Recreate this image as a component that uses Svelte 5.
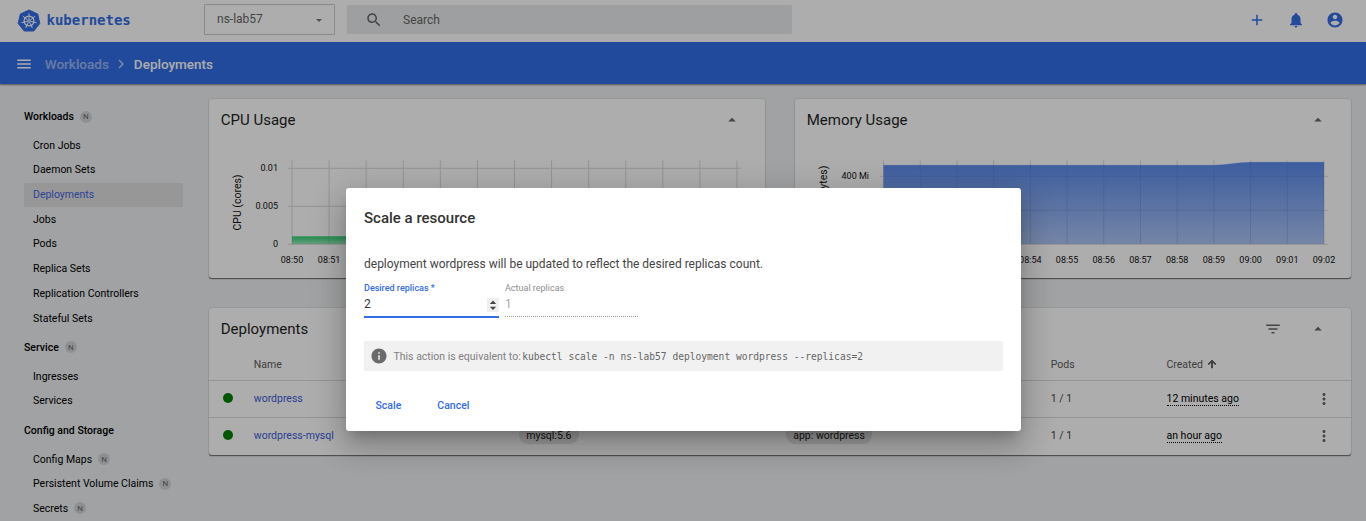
<script>
  const nav = [
    { title: 'Workloads', tag: true, items: [
      { name: 'Cron Jobs' }, { name: 'Daemon Sets' }, { name: 'Deployments', active: true }, { name: 'Jobs' },
      { name: 'Pods' }, { name: 'Replica Sets' }, { name: 'Replication Controllers' }, { name: 'Stateful Sets' }
    ] },
    { title: 'Service', tag: true, items: [{ name: 'Ingresses' }, { name: 'Services' }] },
    { title: 'Config and Storage', tag: false, items: [
      { name: 'Config Maps', tag: true }, { name: 'Persistent Volume Claims', tag: true }, { name: 'Secrets', tag: true }
    ] }
  ];
  const times = ['08:50', '08:51', '08:52', '08:53', '08:54', '08:55', '08:56', '08:57', '08:58', '08:59', '09:00', '09:01', '09:02'];
  const cpu = {
    id: 'cpu', title: 'CPU Usage', axis: 'CPU (cores)', axisX: 28, color: '#00c752', x0: 83, x1: 528,
    rows: [{ y: 27, label: '0.01' }, { y: 65, label: '0.005' }, { y: 103, label: '0' }], labelX: 69,
    area: 'M83 95.5H528V103H83z', line: 'M83 95.5H528'
  };
  const mem = {
    id: 'mem', title: 'Memory Usage', axis: 'Memory (bytes)', axisX: 28, color: '#326de6', x0: 88.5, x1: 529,
    rows: [{ y: 35, label: '400 Mi' }, { y: 69, label: '200 Mi' }, { y: 103, label: '0' }], labelX: 74,
    area: 'M88.5 24.3H419C431 24 443 21.3 456 21.3H529V103H88.5z', line: 'M88.5 24.3H419C431 24 443 21.3 456 21.3H529'
  };
  const rows = [
    { name: 'wordpress', created: '12 minutes ago' },
    { name: 'wordpress-mysql', image: 'mysql:5.6', label: 'app: wordpress', created: 'an hour ago' }
  ];
  const spokes = [0, 1, 2, 3, 4, 5, 6].map((i) => (i * 360) / 7);
</script>

{#snippet icon(d, cls)}
  <svg class="icon {cls}" viewBox="0 0 24 24"><path {d} /></svg>
{/snippet}

{#snippet chart(c)}
  <section class="card graph">
    <header class="card-head">
      <h2>{c.title}</h2>
      {@render icon('M7 14l5-5 5 5z', 'grey')}
    </header>
    <svg class="plot" viewBox="0 0 556 137">
      <defs>
        <linearGradient id={c.id} x1="0" y1="0" x2="0" y2="1">
          <stop offset="0" stop-color={c.color} stop-opacity=".8" />
          <stop offset="1" stop-color={c.color} stop-opacity=".4" />
        </linearGradient>
      </defs>
      {#each times as t, i}
        {@const x = c.x0 + ((c.x1 - c.x0) * i) / 12}
        <path class="grid" d="M{x} 19.5V104" />
        <text x={x} y="122.3" text-anchor="middle">{t}</text>
      {/each}
      {#each c.rows as r}
        <path class="grid" d="M{c.x0 - 4} {r.y + 0.3}H{c.x1 + 4}" />
        <text x={c.labelX} y={r.y + 3} text-anchor="end">{r.label}</text>
      {/each}
      <path d={c.area} fill="url(#{c.id})" />
      <path d={c.line} fill="none" stroke={c.color} stroke-opacity=".5" stroke-width=".5" />
      <text class="axis" transform="translate({c.axisX + 3.5} 61.5) rotate(-90)" text-anchor="middle">{c.axis}</text>
    </svg>
  </section>
{/snippet}

<div class="app">
  <header class="top">
    <div class="brand">
      <svg class="logo" viewBox="-12 -12 24 24">
        <path class="hept" d="M0-11L8.7-6.9 10.8 2.5 4.8 10H-4.8L-10.8 2.5-8.7-6.9z" />
        <circle r="4.9" class="rim" />
        {#each spokes as a}
          <path class="spoke" transform="rotate({a})" d="M0-1.5V-7.8" />
        {/each}
        <circle r="1.7" fill="#fff" /><circle r=".7" fill="#326de6" />
      </svg>
      <span>kubernetes</span>
    </div>
    <div class="select"><span>ns-lab57</span><i></i></div>
    <div class="search">
      {@render icon('M15.5 14h-.79l-.28-.27C15.41 12.59 16 11.11 16 9.5 16 5.91 13.09 3 9.5 3S3 5.91 3 9.5 5.91 16 9.5 16c1.61 0 3.09-.59 4.23-1.57l.27.28v.79l5 4.99L20.49 19l-4.99-5zm-6 0C7.01 14 5 11.99 5 9.5S7.01 5 9.5 5 14 7.01 14 9.5 11.99 14 9.5 14z', 'grey')}
      <span>Search</span>
    </div>
    <div class="actions">
      {@render icon('M19 13h-6v6h-2v-6H5v-2h6V5h2v6h6v2z', 'blue')}
      {@render icon('M12 22c1.1 0 2-.9 2-2h-4c0 1.1.89 2 2 2zm6-6v-5c0-3.07-1.64-5.64-4.5-6.32V4c0-.83-.67-1.5-1.5-1.5s-1.5.67-1.5 1.5v.68C7.63 5.36 6 7.92 6 11v5l-2 2v1h16v-1l-2-2z', 'blue')}
      {@render icon('M12 2C6.48 2 2 6.48 2 12s4.48 10 10 10 10-4.48 10-10S17.52 2 12 2zm0 3c1.66 0 3 1.34 3 3s-1.34 3-3 3-3-1.34-3-3 1.34-3 3-3zm0 14.2c-2.5 0-4.71-1.28-6-3.22.03-1.99 4-3.08 6-3.08 1.99 0 5.97 1.09 6 3.08-1.29 1.94-3.5 3.22-6 3.22z', 'blue')}
    </div>
  </header>

  <div class="crumbs">
    {@render icon('M3 18h18v-2H3v2zm0-5h18v-2H3v2zm0-7v2h18V6H3z', 'white')}
    <span class="parent">Workloads</span>
    {@render icon('M10 6L8.59 7.41 13.17 12l-4.58 4.59L10 18l6-6z', 'chevron')}
    <span>Deployments</span>
  </div>

  <div class="body">
    <nav>
      {#each nav as group}
        <div class="group">{group.title}{#if group.tag}<b class="tag">N</b>{/if}</div>
        {#each group.items as item}
          <div class="item" class:active={item.active}>{item.name}{#if item.tag}<b class="tag">N</b>{/if}</div>
        {/each}
      {/each}
    </nav>

    <main>
      <div class="graphs">
        {@render chart(cpu)}
        {@render chart(mem)}
      </div>

      <section class="card">
        <header class="card-head list-head">
          <h2>Deployments</h2>
          {@render icon('M10 18h4v-2h-4v2zM3 6v2h18V6H3zm3 7h12v-2H6v2z', 'grey filter')}
          {@render icon('M7 14l5-5 5 5z', 'grey')}
        </header>
        <div class="row head">
          <span></span><span>Name</span><span></span><span></span><span>Pods</span>
          <span class="sort">Created {@render icon('M4 12l1.41 1.41L11 7.83V20h2V7.83l5.58 5.59L20 12l-8-8-8 8z', 'arrow')}</span>
        </div>
        {#each rows as r}
          <div class="row">
            <span class="dot"></span>
            <span class="link">{r.name}</span>
            <span>{#if r.image}<span class="chip">{r.image}</span>{/if}</span>
            <span>{#if r.label}<span class="chip">{r.label}</span>{/if}</span>
            <span class="pods">1 / 1</span>
            <span><span class="age">{r.created}</span></span>
            {@render icon('M12 8c1.1 0 2-.9 2-2s-.9-2-2-2-2 .9-2 2 .9 2 2 2zm0 2c-1.1 0-2 .9-2 2s.9 2 2 2 2-.9 2-2-.9-2-2-2zm0 6c-1.1 0-2 .9-2 2s.9 2 2 2 2-.9 2-2-.9-2-2-2z', 'grey more')}
          </div>
        {/each}
      </section>
    </main>
  </div>

  <div class="overlay">
    <div class="dialog">
      <h3>Scale a resource</h3>
      <p>deployment wordpress will be updated to reflect the desired replicas count.</p>
      <div class="fields">
        <div class="field focused">
          <label for="desired">Desired replicas *</label>
          <div class="value" id="desired">2
            <svg class="spin" viewBox="0 0 12 14"><path d="M6 2.6L9.2 6H2.8zM6 12L2.8 8.8H9.2z" /></svg>
          </div>
        </div>
        <div class="field disabled">
          <label for="actual">Actual replicas</label>
          <div class="value" id="actual">1</div>
        </div>
      </div>
      <div class="hint">
        {@render icon('M12 2C6.48 2 2 6.48 2 12s4.48 10 10 10 10-4.48 10-10S17.52 2 12 2zm1 15h-2v-6h2v6zm0-8h-2V7h2v2z', 'info')}
        <span>This action is equivalent to:</span>
        <code>kubectl scale -n ns-lab57 deployment wordpress --replicas=2</code>
      </div>
      <div class="buttons"><button>Scale</button><button>Cancel</button></div>
    </div>
  </div>
</div>

<style>
  :global(body) { margin: 0; overflow: hidden; }
  .app {
    position: relative; width: 1366px; height: 521px; overflow: hidden; background: #eceff1;
    font-family: Roboto, sans-serif; font-size: 10.5px; color: #000; box-sizing: border-box;
  }
  .app :global(*) { box-sizing: border-box; }
  .icon { width: 18px; height: 18px; flex: none; display: block; fill: currentColor; }
  .grey { color: #666; }
  .blue { color: #326de6; }

  .top { display: flex; height: 42px; background: #fff; align-items: flex-start; }
  .brand { display: flex; align-items: center; width: 204px; height: 41px; padding-left: 17px; color: #326de6; }
  .brand span { font: bold 14px/20px "DejaVu Sans Mono", monospace; margin: 0 0 1px 5.5px; }
  .logo { width: 24px; height: 24px; }
  .hept { fill: #326de6; stroke: #326de6; stroke-width: 1; stroke-linejoin: round; }
  .rim { fill: none; stroke: #fff; stroke-width: 1.2; }
  .spoke { fill: none; stroke: #fff; stroke-width: .9; }
  .select {
    display: flex; align-items: center; justify-content: space-between; width: 131px; height: 31px; margin-top: 4px;
    border: 1px solid #ccc; border-radius: 1px; padding: 0 12px 2px; font-size: 12px; color: #666;
  }
  .select i { border: 3.75px solid transparent; border-top-color: #757575; border-bottom: 0; margin-top: 3px; }
  .search {
    display: flex; align-items: center; gap: 20px; width: 445px; height: 29px; margin: 5px 0 0 12px; padding-left: 18px;
    background: #e8ebed; border-radius: 1.5px; font-size: 12px; color: #666;
  }
  .actions { display: flex; gap: 21px; margin: 11px 22.5px 0 auto; }

  .crumbs {
    position: relative; display: flex; align-items: center; height: 42px; padding: 1px 0 0 15px; background: #326de6; color: #fff;
    font-size: 13.5px; font-weight: 500; box-shadow: 0 1px 1.5px rgba(0, 0, 0, .45);
  }
  .crumbs .parent { margin-left: 11.75px; opacity: .5; }
  .crumbs .chevron { margin: 0 3.5px; opacity: .65; }

  .body { display: flex; height: 437px; }
  nav { width: 209px; padding: 16.2px 26px 0 24px; flex: none; }
  .group { display: flex; align-items: center; height: 33px; font-weight: 500; }
  .item + .group { height: 33.5px; }
  .item { display: flex; align-items: center; height: 24px; margin-bottom: .7px; padding-left: 9px; white-space: nowrap; }
  .active { background: #dfdfdf; color: #4464e0; border-radius: 1.5px; }
  .tag {
    display: flex; align-items: center; justify-content: center; width: 12px; height: 12px; margin-left: 6px;
    border-radius: 50%; background: #d3d5d6; color: #666; font-size: 8px; font-weight: 400;
  }

  main { width: 1142px; padding-top: 15px; flex: none; }
  .graphs { display: flex; gap: 30px; margin-bottom: 30px; }
  .card { background: #fff; border-radius: 3px; box-shadow: 0 1.5px 1px -.75px rgba(0, 0, 0, .4), 0 .75px 1.5px rgba(0, 0, 0, .28); }
  .graph { width: 556px; height: 179px; }
  .card-head { display: flex; align-items: center; height: 42px; padding: 0 24px 0 11.75px; }
  .card-head h2 { flex: 1; margin: 0; font-size: 15px; font-weight: 400; color: #1f1f1f; }
  .filter { margin-right: 27.5px; }
  .plot { display: block; width: 556px; height: 137px; font-size: 9px; fill: #111; }
  .plot .axis { font-size: 10.5px; }
  .grid { stroke: #d9d9d9; stroke-width: 1; fill: none; }

  .row {
    display: grid; grid-template-columns: 44.75px 265px 267px 265px 115.75px 148.5px 18px; align-items: center;
    height: 37.25px; padding-bottom: 2px; border-top: 1px solid #dadada;
  }
  .row.head { height: 30px; border: 0; color: #5c5c5c; }
  .dot { width: 10px; height: 10px; margin-left: 14px; border-radius: 50%; background: #008000; }
  .link { color: #3d5bd9; }
  .chip { display: inline-flex; align-items: center; height: 18px; padding: 0 7.5px; border-radius: 9px; background: #e6e6e6; color: #222; }
  .pods { color: #444; }
  .more { margin-top: 2px; }
  .age { border-bottom: 1px dotted #000; }
  .sort { display: flex; align-items: center; gap: 3px; }
  .arrow { width: 12px; height: 12px; stroke: currentColor; stroke-width: 1.8; }

  .overlay { position: absolute; inset: 0; display: flex; justify-content: center; align-items: flex-start; padding: 188px 0 0 1px; background: rgba(0, 0, 0, .32); }
  .dialog {
    width: 675px; height: 243px; padding: 18px; background: #fff; border-radius: 3px; color: #444;
    box-shadow: 0 8px 11px -5px rgba(0, 0, 0, .2), 0 18px 28px 2px rgba(0, 0, 0, .14), 0 7px 34px 6px rgba(0, 0, 0, .12);
  }
  h3 { margin: 0; font-size: 15px; line-height: 24px; font-weight: 500; color: #333; }
  p { margin: 25px 0 0; font-size: 12px; line-height: 18px; color: #444; }
  .fields { display: flex; gap: 6px; margin-top: 8px; }
  .field { width: 135px; height: 37px; }
  .field label { display: block; font-size: 9px; line-height: 12px; padding-top: .5px; height: 12px; }
  .value { position: relative; height: 25px; font-size: 12px; line-height: 23px; color: #333; }
  .focused label { color: #326de6; font-weight: 500; }
  .focused .value { border-bottom: 2px solid #326de6; }
  .disabled { width: 133px; }
  .disabled label, .disabled .value { color: #8e8e8e; }
  .disabled .value { height: 24px; color: #aaa; border-bottom: 1px dotted #999; }
  .spin { position: absolute; right: 0; top: 5px; width: 12px; height: 14px; background: #efefef; fill: #444; }
  .hint { display: flex; align-items: center; height: 30px; margin-top: 23px; padding-left: 5.5px; background: #f1f1f1; color: #808080; border-radius: 1px; white-space: pre; }
  .info { color: #6b6b6b; margin-right: 6px; }
  .hint code { font: 9.6px "DejaVu Sans Mono", monospace; margin-left: 1.5px; color: #666; }
  .buttons { display: flex; gap: 12.5px; margin-top: 20.5px; }
  button { height: 27px; padding: 0 12px 0 11.5px; border: 0; background: none; color: #326de6; font: 500 10.5px Roboto, sans-serif; }
</style>
